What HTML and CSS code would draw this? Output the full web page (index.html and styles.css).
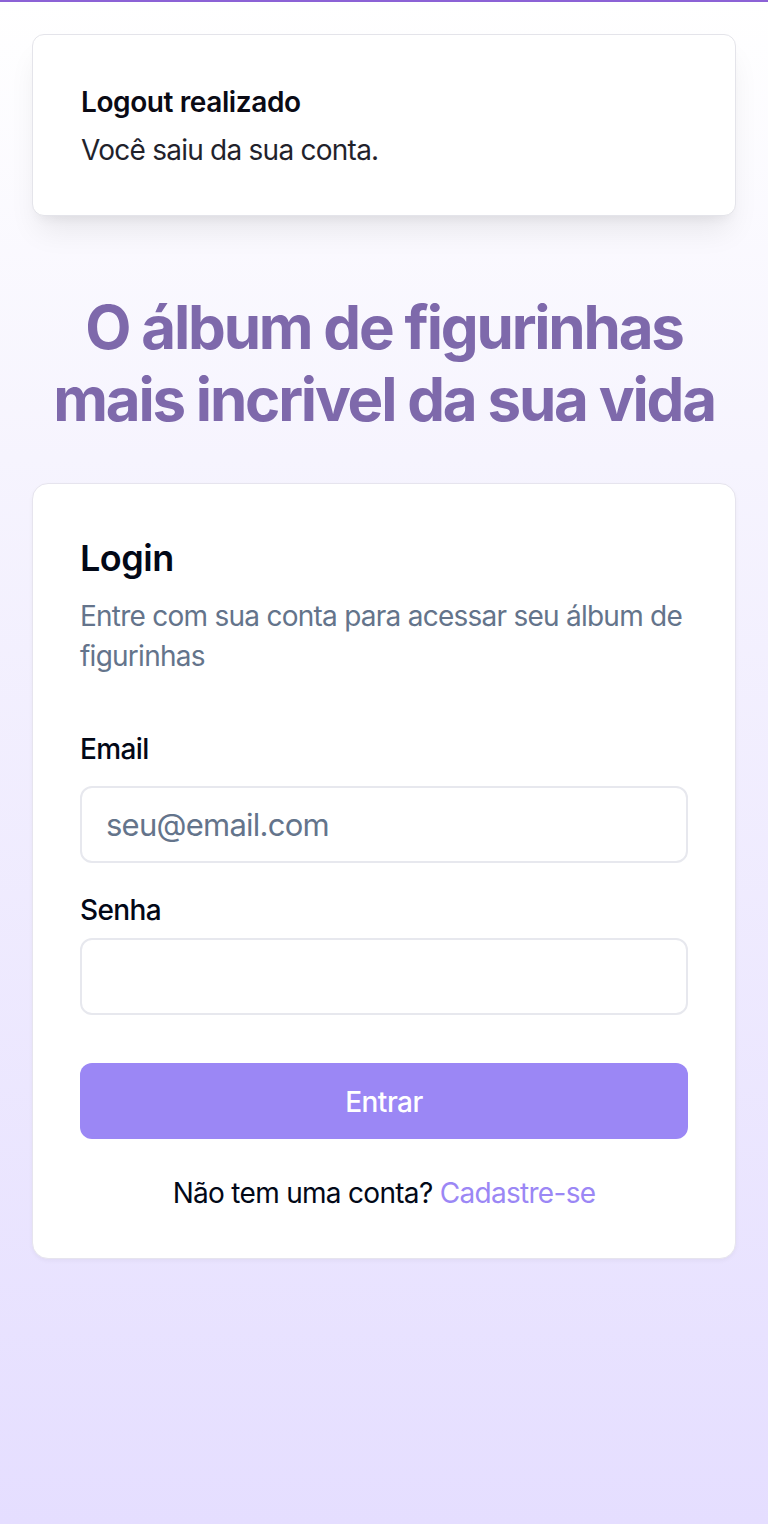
FILE: index.html
```html
<!DOCTYPE html>
<html lang="pt-BR">
<head>
<meta charset="utf-8">
<title>Login</title>
<link rel="stylesheet" href="styles.css">
</head>
<body>
<div class="topbar"></div>
<main class="page">
  <div class="toast">
    <div class="toast-title">Logout realizado</div>
    <div class="toast-desc">Você saiu da sua conta.</div>
  </div>
  <h1 class="hero">O álbum de figurinhas mais incrivel da sua vida</h1>
  <section class="card">
    <h2 class="card-title">Login</h2>
    <p class="card-desc">Entre com sua conta para acessar seu álbum de figurinhas</p>
    <form class="form">
      <div class="field field-email">
        <label class="label" for="email">Email</label>
        <input class="input" id="email" type="email" placeholder="seu@email.com">
      </div>
      <div class="field field-pass">
        <label class="label" for="senha">Senha</label>
        <input class="input" id="senha" type="password">
      </div>
      <button class="btn" type="button">Entrar</button>
    </form>
    <p class="footer">Não tem uma conta? <a class="link" href="#">Cadastre-se</a></p>
  </section>
</main>
</body>
</html>
```
FILE: styles.css
```css
* { box-sizing: border-box; }
html, body { margin: 0; padding: 0; }
body {
  min-height: 1524px;
  font-family: Inter, "Noto Sans", "Liberation Sans", sans-serif;
  background: linear-gradient(to bottom, #ffffff 0%, #f6f4fe 30%, #e5deff 100%);
  color: #020817;
}
.topbar { height: 2px; background: #8c62d6; }
.page { padding: 32px 32px 0; }
.toast {
  background: #fff;
  border: 1px solid #e4e4ea;
  border-radius: 12px;
  padding: 47px 48px 45px;
  box-shadow: 0 20px 30px -6px rgba(0,0,0,0.08), 0 8px 12px -6px rgba(0,0,0,0.06);
  display: flex;
  flex-direction: column;
  gap: 8px;
}
.toast-title { font-size: 28px; line-height: 40px; font-weight: 600; color: #0a0a14; letter-spacing: -0.4px; }
.toast-desc { font-size: 28px; line-height: 40px; color: #0a0a14; opacity: 0.9; letter-spacing: -0.75px; }
.hero {
  margin: 75px 0 48px;
  text-align: center;
  font-size: 60px;
  line-height: 72px;
  font-weight: 700;
  letter-spacing: -2.2px;
  color: #7e69ab;
}
.card {
  background: #fff;
  border: 1px solid #e6e4ee;
  border-radius: 16px;
  padding: 54px 47px 45px;
  box-shadow: 0 2px 4px rgba(0,0,0,0.04);
}
.card-title {
  margin: 0;
  font-size: 36px;
  line-height: 40px;
  font-weight: 600;
  letter-spacing: -0.5px;
  color: #020817;
}
.card-desc {
  margin: 18px 0 0;
  font-size: 28px;
  line-height: 40px;
  letter-spacing: -0.75px;
  color: #64748b;
}
.form { display: flex; flex-direction: column; margin-top: 53px; }
.field { display: flex; flex-direction: column; }
.field-email { gap: 17px; }
.field-pass { gap: 8px; margin-top: 27px; }
.label { font-size: 28px; line-height: 40px; font-weight: 500; color: #020817; letter-spacing: -0.6px; }
.input {
  height: 77px;
  width: 100%;
  border: 2px solid #e7e8ee;
  border-radius: 12px;
  padding: 0 24px;
  font-family: inherit;
  font-size: 31px;
  letter-spacing: -0.75px;
  color: #020817;
  background: #fff;
  outline: none;
}
.input::placeholder { color: #64748b; }
.btn {
  margin-top: 48px;
  height: 76px;
  border: none;
  border-radius: 12px;
  background: #9b87f5;
  color: #fff;
  font-family: inherit;
  font-size: 28px;
  font-weight: 500;
  letter-spacing: -0.5px;
  padding-top: 2px;
}
.footer {
  margin: 34px 0 0;
  text-align: center;
  font-size: 28px;
  line-height: 40px;
  letter-spacing: -0.7px;
  color: #020817;
}
.link { color: #9b87f5; text-decoration: none; }
```
